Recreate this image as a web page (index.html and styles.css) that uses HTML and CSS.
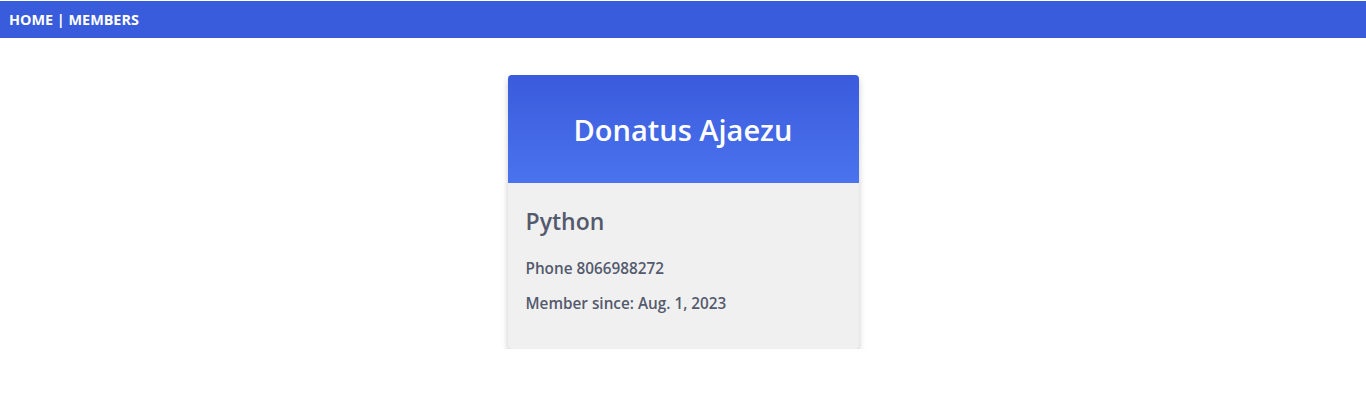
FILE: index.html
```html
<!DOCTYPE html>
<html>
<head>
<meta charset="utf-8">
<link rel="stylesheet" href="styles.css">
</head>
<body>
<nav class="nav"><a href="#">HOME</a> | <a href="#">MEMBERS</a></nav>
<main class="main">
  <div class="card">
    <div class="card-head"><h1>Donatus Ajaezu</h1></div>
    <div class="card-body">
      <h2>Python</h2>
      <p>Phone 8066988272</p>
      <p>Member since: Aug. 1, 2023</p>
    </div>
  </div>
</main>
</body>
</html>
```
FILE: styles.css
```css
html, body { margin: 0; padding: 0; background: #fff; }
body { font-family: "Open Sans", "Liberation Sans", sans-serif; padding-top: 1px; }
.nav {
  background: #385cdc;
  height: 37px;
  display: flex;
  align-items: center;
  padding-left: 9px;
  color: #fff;
  font-weight: 700;
  font-size: 14.4px;
  white-space: pre;
}
.nav a { color: #fff; text-decoration: none; }
.main { display: flex; justify-content: center; padding-top: 37px; }
.card {
  width: 351px;
  border-radius: 4px;
  overflow: hidden;
  box-shadow: 0 4px 6px rgba(0,0,0,0.22);
  background: #f0f0f0;
}
.card-head {
  height: 108px;
  background: linear-gradient(#3a5bdc, #4b73ee);
  display: flex;
  align-items: center;
  justify-content: center;
}
.card-head h1 { margin: 0; color: #fff; font-size: 29px; font-weight: 600; }
.card-body { padding: 22px 18px 35px; color: #545a6d; }
.card-body h2 { margin: 0 0 21px; font-size: 23px; font-weight: 600; }
.card-body p { margin: 0; font-size: 15.3px; font-weight: 600; line-height: 21px; }
.card-body p + p { margin-top: 14px; }
```
